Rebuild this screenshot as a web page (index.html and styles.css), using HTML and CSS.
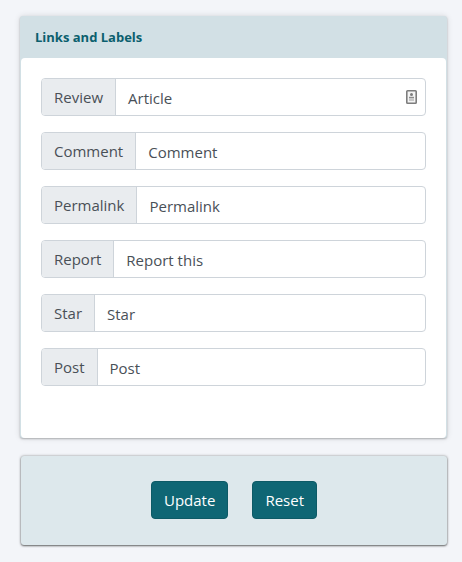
FILE: index.html
```html
<!DOCTYPE html>
<html>
<head>
<title>Links and Labels</title>
<link rel="stylesheet" href="styles.css">
</head>
<body>

<div class="card">
  <div class="card-header">Links and Labels</div>
  <div class="card-body">
    <div class="field">
      <span class="field-label">Review</span>
      <div class="field-value">
        Article
        <svg class="contact-icon" width="11" height="14" viewBox="0 0 11 14">
          <rect x="0.8" y="0.8" width="9.4" height="12.4" rx="0.8" fill="#f4f4f4" stroke="#7d7d7d" stroke-width="1.6"/>
          <circle cx="5.5" cy="4.6" r="1.5" fill="#7d7d7d"/>
          <rect x="3" y="6.8" width="5" height="1.6" fill="#8c8c8c"/>
          <rect x="3" y="9.2" width="5" height="1.6" fill="#bdbdbd"/>
        </svg>
      </div>
    </div>
    <div class="field">
      <span class="field-label">Comment</span>
      <div class="field-value">Comment</div>
    </div>
    <div class="field">
      <span class="field-label">Permalink</span>
      <div class="field-value">Permalink</div>
    </div>
    <div class="field">
      <span class="field-label">Report</span>
      <div class="field-value">Report this</div>
    </div>
    <div class="field">
      <span class="field-label">Star</span>
      <div class="field-value">Star</div>
    </div>
    <div class="field">
      <span class="field-label">Post</span>
      <div class="field-value">Post</div>
    </div>
  </div>
</div>

<div class="actions">
  <button class="btn">Update</button>
  <button class="btn">Reset</button>
</div>

</body>
</html>
```

FILE: styles.css
```css
body {
  margin: 0;
  padding: 16px 15px 0 20px;
  height: 562px;
  box-sizing: border-box;
  overflow: hidden;
  background-color: #f3f5f9;
  font-family: "Open Sans", "Noto Sans", sans-serif;
  font-size: 15px;
  color: #495057;
}

.card {
  height: 422px;
  box-sizing: border-box;
  display: flex;
  flex-direction: column;
  background-color: #d2e0e5;
  border-radius: 3px;
  box-shadow: 0 1px 2px rgba(0, 0, 0, 0.25), 0 0 6px rgba(0, 0, 0, 0.12);
}

.card-header {
  height: 41px;
  padding-left: 15px;
  box-sizing: border-box;
  display: flex;
  align-items: center;
  font-size: 13px;
  font-weight: 700;
  color: #0b5f6e;
}

.card-body {
  flex: 1;
  margin: 1px 1px 0;
  padding: 20px 20px 0;
  background-color: #fff;
  border-radius: 4px;
}

.field {
  display: flex;
  height: 38px;
  box-sizing: border-box;
  margin-bottom: 16px;
  border: 1px solid #ced4da;
  border-radius: 4px;
}

.field-label {
  display: flex;
  align-items: center;
  padding: 0 12px;
  background-color: #e9ecef;
  border-right: 1px solid #ced4da;
  border-radius: 3px 0 0 3px;
}

.field-value {
  flex: 1;
  display: flex;
  align-items: center;
  justify-content: space-between;
  padding: 2px 8px 0 12px;
}

.contact-icon {
  margin-top: -2px;
}

.actions {
  height: 89px;
  box-sizing: border-box;
  margin: 18px 0 0 1px;
  padding-bottom: 1px;
  display: flex;
  justify-content: center;
  align-items: center;
  gap: 24px;
  background-color: #dde8ec;
  border-radius: 3px;
  box-shadow: 0 1px 2px rgba(0, 0, 0, 0.5), 0 0 3px rgba(0, 0, 0, 0.35);
}

.btn {
  height: 38px;
  padding: 0 12px;
  font-family: inherit;
  font-size: 15px;
  color: #fff;
  background-color: #0f6674;
  border: 1px solid #0d5a66;
  border-radius: 4px;
}
```
